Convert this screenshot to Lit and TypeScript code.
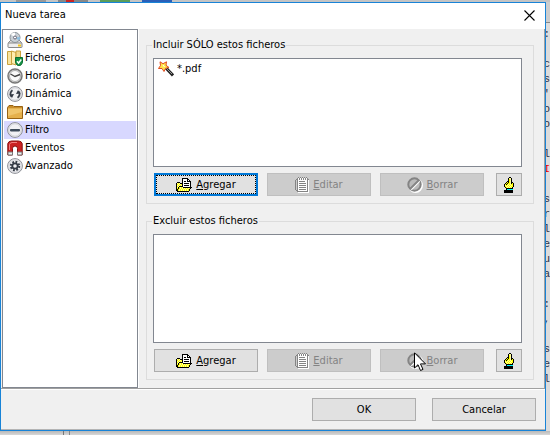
import { LitElement, html, css, svg, nothing } from "lit";
import { customElement } from "lit/decorators.js";

const ball = (inner: unknown) => svg`
  <circle cx="8" cy="8" r="7.4" fill="#f1f1f4" stroke="#8b8d94"/>
  <circle cx="8" cy="8" r="6.2" fill="none" stroke="#cfd1d6"/>${inner}`;

const icons: Record<string, unknown> = {
  general: svg`<path d="M1.5 13V10.500L4 8H12L14.500 10.500V13Z" fill="#dedede" stroke="#8b8b8b"/>
    <rect x="1" y="11" width="14" height="4.500" rx=".5" fill="#eee" stroke="#888"/>
    <circle cx="8" cy="5.500" r="5" fill="#c9d0d6" stroke="#8a9298"/>
    <path d="M8 5.500L4 2.500A5 5 0 0 1 8 .5Z" fill="#fff"/><path d="M8 5.500L12 8.500A5 5 0 0 0 13 5Z" fill="#8dbfe0"/>
    <circle cx="8" cy="5.500" r="1.500" fill="#fff" stroke="#667"/><rect x="11" y="12.500" width="3" height="2" fill="#f5c518"/>`,
  ficheros: svg`<path d="M.5 1.500H5V14.500H.5Z" fill="#f7e3a0" stroke="#c9a13b"/><path d="M4.500 1L9 2.500V15L4.500 13.500Z" fill="#ffedb0" stroke="#c9a13b"/>
    <path d="M9 1H13.500V13H9Z" fill="#f2d88a" stroke="#c9a13b"/>
    <path d="M8.500 7.500H15.500V12.500Q15 15 12 16Q9 15 8.500 12.500Z" fill="#159447" stroke="#0b6b31"/><path d="M10 11.300L11.600 13L14.300 9.500" fill="none" stroke="#fff" stroke-width="1.500"/>`,
  horario: svg`<circle cx="8" cy="8" r="7" fill="#e8e8e8" stroke="#777" stroke-width="1.500"/><circle cx="8" cy="8" r="5.500" fill="#fafafa" stroke="#aaa"/><path d="M3.500 6L8 8.500L13 6.500" fill="none" stroke="#444" stroke-width="1.400"/>`,
  dinamica: ball(svg`<path d="M4.300 10.500A4.400 4.400 0 0 1 5.500 4.200M11.700 5.500A4.400 4.400 0 0 1 10.500 11.800" fill="none" stroke="#343b46" stroke-width="1.800"/><path d="M2.300 8.500L7 8L5 12ZM13.700 7.500L9 8L11 4Z" fill="#343b46"/>`),
  archivo: svg`<path d="M.5 3.500L2 1.500H6L7 2.500H15.500V14.500H.5Z" fill="#c98e2b" stroke="#996313"/><path d="M1 4.500H15V14H1Z" fill="#e5b04b"/><path d="M1 4.500H15V8L1 12Z" fill="#f0c56b"/>`,
  filtro: ball(svg`<rect x="3" y="7" width="10" height="2.400" rx=".8" fill="#3c4a59"/>`),
  eventos: svg`<path d="M.8 15V3.500Q1.500 1 4.500 1H11.500Q14.500 1 15.200 3.500V15H10.500V8.500A2.500 2.500 0 0 0 5.500 8.500V15Z" fill="#cb2222" stroke="#871010"/><path d="M2.500 10V4.500Q3 2.700 5 2.500H10" fill="none" stroke="#f08080"/><path d="M1 12H5.500V15H1ZM10.500 12H15V15H10.500Z" fill="#eee" stroke="#777"/>`,
  avanzado: ball(svg`<circle cx="8" cy="8" r="4.200" fill="none" stroke="#343b46" stroke-width="2" stroke-dasharray="1.800 1.500"/><circle cx="8" cy="8" r="2.700" fill="none" stroke="#343b46" stroke-width="1.800"/>`),
  wand: svg`<path d="M8 7L15 14.500" stroke="#222" stroke-width="3"/><path d="M8 7L14 13" stroke="#999" stroke-width="1"/><path d="M2 .8L5 2.700L8.500 .8L8 4.300L11 6.500L7.500 7.300L6 10.500L4 7.500L.5 7.500L2.500 4.500Z" fill="#ffe34a" stroke="#e04a24"/><path d="M5 4L6.500 6" stroke="#fff"/>`,
};

// Pixel-drawn toolbar glyphs; each letter picks a colour from the palette.
const palette: Record<string, string> = { k: "#000", y: "#ff0", l: "#ffff9c", w: "#fff", c: "#0ff", g: "#848484" };
const bitmaps: Record<string, string[]> = {
  folder: [
    "......kkkkkk....",
    "......kwwwwkk...",
    "......kwwwwkwk..",
    "......kwkkwkkkk.",
    ".kkk..kwwwwwwwk.",
    "klylkkkwkkkkkwk.",
    "kylylykwwwwwwwk.",
    "klylylkwkkkkkwk.",
    "kylkkkkwwwwwwwk.",
    "klkylylkkkkkkkkk",
    "kykylylylylylyk.",
    "kkylylylylylyk..",
    "kkylylylylylyk..",
    ".kkkkkkkkkkkk...",
  ],
  notes: [
    "...g.g.g.g.g..",
    "..gwgwgwgwgwg.",
    ".ggwgwgwgwgwgg",
    "g.gwwwwwwwwwgw",
    "g.gwggggggwwgw",
    "g.gwwwwwwwwwgw",
    "g.gwgggggggwgw",
    "g.gwwwwwwwwwgw",
    "g.gwgggggggwgw",
    "g.gwwwwwwwwwgw",
    "g.gwgggggggwgw",
    "g.gwwwwwwwwwgw",
    "g.gwgggggggwgw",
    ".ggwwwwwwwwwgw",
    "..gggggggggggw",
    "...wwwwwwwwwww",
  ],
  hand: [
    ".....kk...",
    "....kllk..",
    "....kylk..",
    "....kylk..",
    "...kkylk..",
    "..kykylkk.",
    ".kykyylkyk",
    "kykylylyyk",
    "klylylylyk",
    "kylylylyyk",
    ".kylylylk.",
    "..kkkkkkk.",
    "..kcccccc.",
    "kkkkkkkkk.",
    "kkkkkkkkk.",
    "kkkkkkkkk.",
  ],
};

const bitmap = (name: string) => {
  const rows = bitmaps[name];
  const w = rows[0].length;
  return html`<svg width=${w} height=${rows.length} viewBox="0 0 ${w} ${rows.length}" shape-rendering="crispEdges" aria-hidden="true">
    ${rows.map((row, y) => [...row].map((c, x) => (c === "." ? null : svg`<rect x=${x} y=${y} width="1" height="1" fill=${palette[c]}/>`)))}
  </svg>`;
};
const icon = (name: string) => html`<svg width="16" height="16" viewBox="0 0 16 16" aria-hidden="true">${icons[name]}</svg>`;
const forbidden = html`<svg width="16" height="16" viewBox="0 0 16 16" aria-hidden="true">
  <circle cx="8.500" cy="8.500" r="6.500" fill="none" stroke="#fff" stroke-width="2"/>
  <circle cx="7.500" cy="7.500" r="6.200" fill="#bbb" stroke="#848484" stroke-width="2"/>
  <path d="M4 12.500L12.500 4" stroke="#fff" stroke-width="2"/><path d="M3 12L12 3" stroke="#848484" stroke-width="2"/></svg>`;

const sections = ["General", "Ficheros", "Horario", "Dinámica", "Archivo", "Filtro", "Eventos", "Avanzado"];
const codeLines = [":", "", "c", "s", "'", "o", "o", "", "l", "I", "", "s", "r", "l", "e", "u", "a", "", ":", ",", "", "s", "e", "l"];

@customElement("app-root")
export class AppRoot extends LitElement {
  static styles = css`
    :host { display: block; font: 11px/14px "DejaVu Sans Condensed", "DejaVu Sans", sans-serif; color: #000; }
    * { box-sizing: border-box; }
    svg { flex: none; display: block; }
    .desktop { display: grid; grid-template: 2px auto 1fr / minmax(0, 1fr) 4px; min-height: 100vh; background: #dcdcdc; }
    .toolbar { grid-column: 1 / 3; display: flex; gap: 12px; padding-left: 16px; overflow: hidden; background: #c4c4c4; }
    .tool { width: 30px; background: #999; }
    .tool.red { background: linear-gradient(90deg, #888 8px, #c22 8px 16px, #888 16px); }
    .tool.green { background: #5a9d5a; }
    .tool.blue { background: #2a5fb8; }
    .code { display: flex; flex-direction: column; align-items: flex-end; font: 11px/15px "Liberation Mono", monospace; color: #334; overflow: hidden; height: 0; min-height: 100%; }
    .code::before { content: ""; flex: none; width: 4px; height: 20px; margin-bottom: 4px; background: #cdcdcd; border-bottom: 1px solid #888; }
    .code span { flex: none; height: 15px; }
    .code .hot { color: #e00; }
    .below { grid-column: 1 / 3; display: flex; background: linear-gradient(#b8b8b8, #d8d8d8); }
    .pane { width: 64px; border-right: 1px solid #777; }
    .split { width: 6px; border-right: 1px solid #888; }
    .dialog { border: 1px solid #1883d7; background: #f0f0f0; display: flex; flex-direction: column; }
    .title { display: flex; align-items: center; justify-content: space-between; height: 26px; background: #fff; padding: 0 10px 2px 4px; }
    h1 { font: inherit; margin: 0; }
    button { font: inherit; color: inherit; display: flex; align-items: center; justify-content: center; gap: 4px; height: 23px; padding: 0; background: #e1e1e1; border: 1px solid #adadad; }
    .close { background: none; border: 0; }
    .body { display: flex; height: 359px; margin-left: 1px; }
    nav { width: 136px; background: #fff; border: 1px solid #828790; padding: 1px 1px 0; box-shadow: 1px 0 #a0a0a0; }
    .item { display: flex; align-items: center; gap: 2px; height: 18px; padding-left: 3px; color: inherit; text-decoration: none; }
    .item[aria-current] { background: #d8d8ff; }
    .page { flex: 1; display: flex; flex-direction: column; gap: 10px; padding: 9px 10px 8px 7px; border-left: 1px solid #fff; min-width: 0; border-right: 1px solid #a0a0a0; }
    fieldset { flex: 1; margin: 0; min-width: 0; border: 1px solid #dcdcdc; padding: 6px 11px 7px 6px; display: flex; flex-direction: column; gap: 6px; }
    legend { padding: 0 1px; margin-left: -1px; }
    .list { flex: 1; margin: 0; list-style: none; background: #fff; border: 1px solid #828790; padding: 2px 4px; }
    .list li { display: flex; align-items: center; gap: 3px; }
    .row { display: grid; grid-template-columns: repeat(3, 1fr) 29px; gap: 9px; padding-left: 1px; }
    .row .hand { margin-left: 3px; }
    .row button:disabled { background: #ccc; border-color: #bfbfbf; color: #838383; }
    .row .focus { border: 2px solid #0078d7; outline: 1px dotted #000; outline-offset: -3px; }
    .foot { display: flex; justify-content: flex-end; gap: 16px; padding: 9px; border-top: 1px solid #a0a0a0; box-shadow: inset 0 1px #fff, inset 0 -1px #b4b4b4; }
    .foot button { width: 104px; }
    .pointer { position: absolute; left: 414px; top: 352px; }
  `;

  group(title: string, focus: boolean, items: string[]) {
    return html`<fieldset>
      <legend>${title}</legend>
      <ul class="list">${items.map((i) => html`<li>${icon("wand")}${i}</li>`)}</ul>
      <div class="row">
        <button class=${focus ? "focus" : ""}>${bitmap("folder")}<span><u>A</u>gregar</span></button>
        <button disabled>${bitmap("notes")}<span><u>E</u>ditar</span></button>
        <button disabled>${forbidden}<span><u>B</u>orrar</span></button>
        <button class="hand" aria-label="Seleccionar">${bitmap("hand")}</button>
      </div>
    </fieldset>`;
  }

  render() {
    return html`<div class="desktop">
      <div class="toolbar"><i class="tool"></i><i class="tool red"></i><i class="tool green"></i><i class="tool blue"></i></div>
      <div class="dialog" role="dialog" aria-label="Nueva tarea">
        <div class="title"><h1>Nueva tarea</h1>
          <button class="close" aria-label="Cerrar"><svg width="11" height="11" viewBox="0 0 11 11"><path d="M.5 .5L10.500 10.500M10.500 .5L.5 10.500" stroke="#000" stroke-width="1.100"/></svg></button></div>
        <div class="body">
          <nav>${sections.map((s) => html`<a class="item" href="#" aria-current=${s === "Filtro" ? "page" : nothing}>${icon(s.toLowerCase().replace("á", "a"))}${s}</a>`)}</nav>
          <div class="page">
            ${this.group("Incluir SÓLO estos ficheros", true, ["*.pdf"])}
            ${this.group("Excluir estos ficheros", false, [])}
          </div>
        </div>
        <div class="foot"><button>OK</button><button>Cancelar</button></div>
      </div>
      <div class="code">${codeLines.map((l) => html`<span class=${l === "I" ? "hot" : ""}>${l}</span>`)}</div>
      <div class="below"><div class="pane"></div><div class="split"></div></div>
      <svg class="pointer" width="13" height="20" viewBox="0 0 13 20"><path d="M.5 .8V16L4 12.700L6.500 18.500L9 17.400L6.500 11.900H11.500Z" fill="#fff" stroke="#000"/></svg>
    </div>`;
  }
}
